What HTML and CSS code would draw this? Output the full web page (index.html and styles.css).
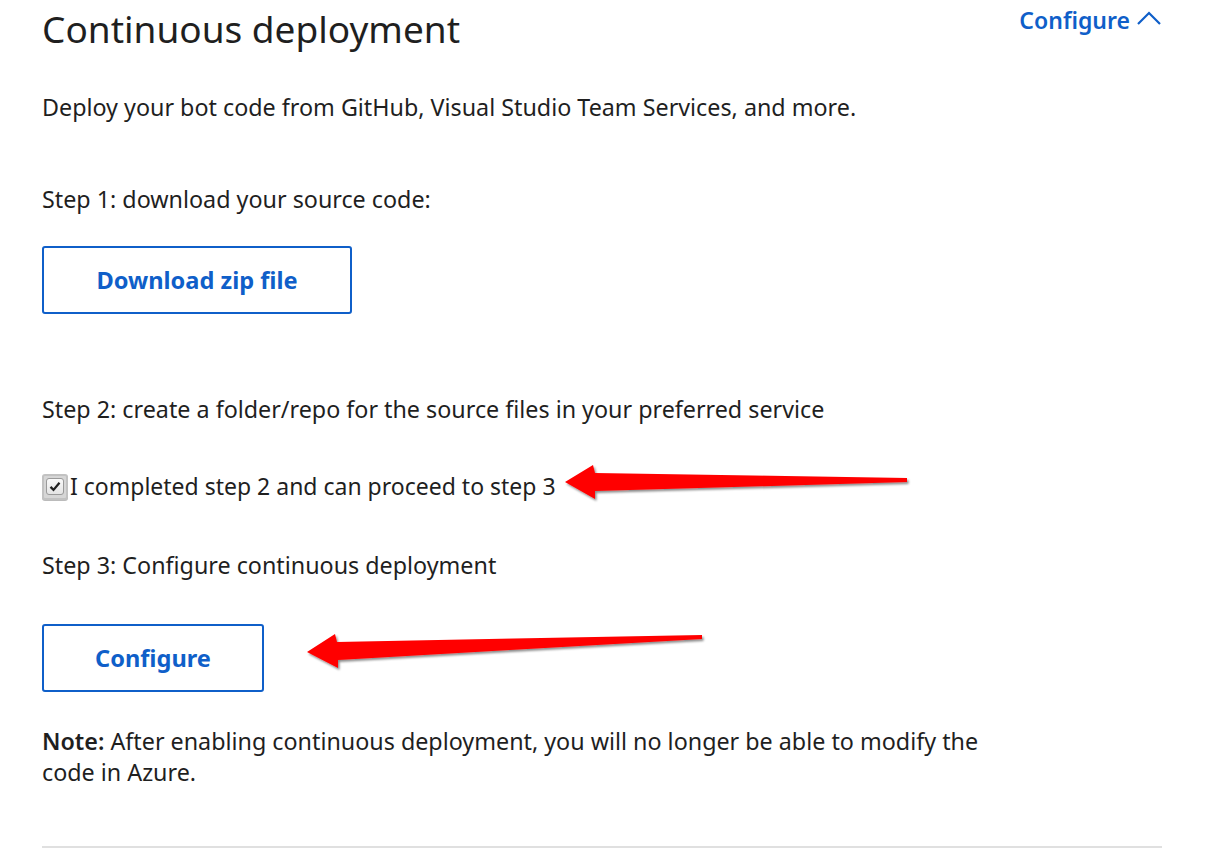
FILE: index.html
```html
<!DOCTYPE html>
<html lang="en">
<head>
<meta charset="utf-8">
<title>Continuous deployment</title>
<link rel="stylesheet" href="styles.css">
</head>
<body>
<div class="page">
  <header class="head">
    <h1 class="title">Continuous deployment</h1>
    <a class="toggle" href="#">Configure
      <svg class="chev" width="26" height="16" viewBox="0 0 26 16"><path d="M2 14 L13 3 L24 14" fill="none" stroke="currentColor" stroke-width="2.2"/></svg>
    </a>
  </header>
  <p class="intro">Deploy your bot code from GitHub, Visual Studio Team Services, and more.</p>
  <p class="step step1">Step 1: download your source code:</p>
  <button class="btn btn-zip">Download zip file</button>
  <p class="step step2">Step 2: create a folder/repo for the source files in your preferred service</p>
  <label class="check">
    <span class="box"><span class="inner"><svg width="16" height="14" viewBox="0 0 16 14"><path d="M2 7.5 L6 11.5 L14 2" fill="none" stroke="#222" stroke-width="3"/></svg></span></span>
    <span class="check-text">I completed step 2 and can proceed to step 3</span>
  </label>
  <p class="step step3">Step 3: Configure continuous deployment</p>
  <button class="btn btn-conf">Configure</button>
  <p class="note"><span class="note-label">Note:</span> After enabling continuous deployment, you will no longer be able to modify the code in Azure.</p>
  <hr class="rule">
</div>
<svg class="arrows" width="1228" height="866" viewBox="0 0 1228 866">
  <defs>
    <filter id="sh" x="-10%" y="-50%" width="120%" height="200%">
      <feDropShadow dx="1.5" dy="2" stdDeviation="1.2" flood-color="#000" flood-opacity="0.45"/>
    </filter>
  </defs>
  <polygon filter="url(#sh)" fill="#ff0000" points="565,482 593,465 595,473 907,478 907,482 595,491 595,499"/>
  <polygon filter="url(#sh)" fill="#ff0000" points="307,652 335,634 337,642 702,635 702,639 338,660 338,668"/>
</svg>
</body>
</html>
```

FILE: styles.css
```css
html, body {
  margin: 0;
  padding: 0;
  background: #ffffff;
}
body {
  font-family: "Noto Sans", "Open Sans", sans-serif;
  color: #1f1f1f;
  width: 1228px;
  height: 866px;
  overflow: hidden;
  position: relative;
}
.page {
  padding: 0 66px 0 42px;
}
.head {
  display: flex;
  justify-content: space-between;
  align-items: flex-start;
}
.title {
  margin: 0;
  padding-top: 5px;
  font-weight: 400;
  font-size: 37px;
  line-height: 48px;
  color: #1f1f1f;
}
.toggle {
  display: flex;
  align-items: center;
  gap: 6px;
  margin-top: 4px;
  color: #0f5fc9;
  text-decoration: none;
  font-weight: 600;
  font-size: 23px;
  line-height: 32px;
}
.chev { margin-top: -4px; }
.intro, .step, .note {
  margin: 0;
  font-size: 23.3px;
  line-height: 31px;
}
.intro { margin-top: 39px; }
.step1 { margin-top: 61px; }
.btn {
  display: block;
  font-family: inherit;
  background: #fff;
  border: 2px solid #0f5fc9;
  border-radius: 3px;
  color: #0f5fc9;
  font-weight: 700;
  font-size: 23.6px;
  height: 68px;
  padding: 0;
  box-sizing: border-box;
}
.btn-zip { width: 310px; margin-top: 31px; }
.step2 { margin-top: 80px; }
.check {
  display: flex;
  align-items: center;
  margin-top: 46px;
  font-size: 23px;
  line-height: 31px;
}
.box {
  width: 22px;
  height: 22px;
  border: 2px solid #c2c2c2;
  border-radius: 3px;
  background: #d6d6d6;
  display: flex;
  align-items: center;
  justify-content: center;
  margin-right: 2px;
  box-shadow: 0 1px 0 #bbb;
}
.inner {
  width: 18px;
  height: 17px;
  background: linear-gradient(#fafafa, #e4e4e4);
  border: 1px solid #9a9a9a;
  border-radius: 3px;
  display: flex;
  align-items: center;
  justify-content: center;
  box-sizing: border-box;
}
.inner svg { width: 12px; height: 11px; }
.step3 { margin-top: 48px; }
.btn-conf { width: 222px; margin-top: 43px; }
.note { margin-top: 34px; max-width: 950px; }
.note-label { font-weight: 600; }
.rule {
  margin: 58px 0 0 0;
  border: 0;
  border-top: 2px solid #e0e0e0;
}
.arrows {
  position: absolute;
  left: 0;
  top: 0;
  pointer-events: none;
}
```
